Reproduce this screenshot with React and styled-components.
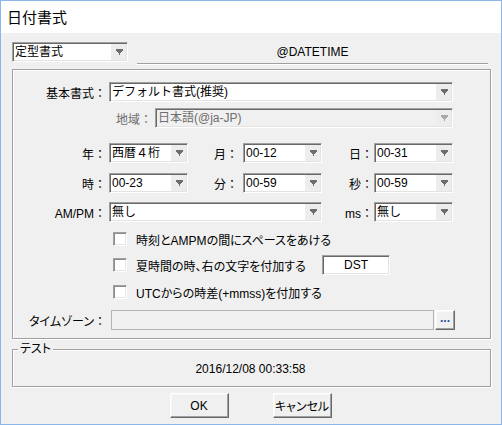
import React from 'react';
import styled, { createGlobalStyle } from 'styled-components';

const Global = createGlobalStyle`
  html, body { margin: 0; padding: 0; background: #ffffff; }
  body {
    font-family: "Liberation Sans", "Noto Sans CJK JP", sans-serif;
    font-size: 12px;
    color: #000;
  }
  * { box-sizing: border-box; }
`;

const Window = styled.div`
  width: 502px;
  height: 425px;
  border: 1px solid #8ab6e8;
  background: #f0f0f0;
  display: flex;
  flex-direction: column;
  overflow: hidden;
`;

const TitleBar = styled.div`
  height: 32px;
  background: #ffffff;
  display: flex;
  align-items: center;
  padding-left: 6px;
  padding-bottom: 1px;
  font-family: "Noto Sans CJK JP", sans-serif;
  font-size: 15px;
  color: #000;
`;

const Body = styled.div`
  flex: 1;
  display: flex;
  flex-direction: column;
  padding: 9px 0 0 11px;
`;

const TopRow = styled.div`
  display: flex;
  align-items: flex-start;
  height: 22px;
`;

const Header = styled.div`
  margin-left: 9px;
  width: 351px;
  height: 22px;
  border-bottom: 1px solid #a0a0a0;
  box-shadow: 0 1px 0 #ffffff;
  display: flex;
  justify-content: center;
  align-items: center;
  padding-bottom: 2px;
`;

const Frame = styled.div`
  margin-top: 5px;
  width: 479px;
  height: 270px;
  border: 1px solid #a0a0a0;
  box-shadow: inset 1px 1px 0 #ffffff, 1px 1px 0 #ffffff;
  display: flex;
  flex-direction: column;
  padding-top: 12px;
`;

const Row = styled.div`
  display: flex;
  align-items: center;
  height: 20px;
  margin-top: ${p => p.$mt || 0}px;
`;

const Label = styled.div`
  width: ${p => p.$w}px;
  text-align: right;
  padding-right: ${p => (p.$pr ?? 3)}px;
  white-space: nowrap;
  color: ${p => (p.$disabled ? '#6d6d6d' : '#000')};
`;

const Kana = styled.span`
  font-feature-settings: "palt";
`;

const ComboBox = styled.div`
  width: ${p => p.$w}px;
  height: 20px;
  display: flex;
  border-style: solid;
  border-width: 1px;
  border-color: #a0a0a0 #ffffff #ffffff #a0a0a0;
  box-shadow: inset 1px 1px 0 #696969, inset -1px -1px 0 #e3e3e3;
  padding: 1px;
  background: ${p => (p.$disabled ? '#f0f0f0' : '#ffffff')};
`;

const ComboText = styled.div`
  flex: 1;
  line-height: 16px;
  padding-left: 1px;
  white-space: nowrap;
  overflow: hidden;
  color: ${p => (p.$disabled ? '#6d6d6d' : '#000')};
`;

const ComboArrow = styled.div`
  width: 15px;
  height: 16px;
  background: #ededed;
  display: flex;
  align-items: center;
  justify-content: center;
  padding-left: 1px;
`;

const CheckRow = styled.div`
  display: flex;
  align-items: center;
  height: 20px;
  margin-top: ${p => p.$mt || 0}px;
  padding-left: 100px;
`;

const CheckBox = styled.div`
  width: 14px;
  height: 14px;
  background: #ffffff;
  border-style: solid;
  border-width: 1px;
  border-color: #a0a0a0 #ffffff #ffffff #a0a0a0;
  box-shadow: inset 1px 1px 0 #8c8c8c, inset -1px -1px 0 #e8e8e0;
`;

const CheckText = styled.div`
  margin-left: 9px;
  width: ${p => (p.$w ? `${p.$w}px` : 'auto')};
  white-space: nowrap;
  font-feature-settings: "palt";
`;

const TextBox = styled.div`
  width: ${p => p.$w}px;
  height: ${p => p.$h || 20}px;
  display: flex;
  align-items: center;
  justify-content: center;
  background: #ffffff;
  border-style: solid;
  border-width: 1px;
  border-color: #a0a0a0 #ffffff #ffffff #a0a0a0;
  box-shadow: inset 1px 1px 0 #696969, inset -1px -1px 0 #e3e3e3;
`;

const DisabledField = styled.div`
  width: ${p => p.$w}px;
  height: 20px;
  margin-left: 2px;
  border: 1px solid #b4b4b4;
  background: #f0f0f0;
`;

const SmallButton = styled.button`
  width: 20px;
  height: 20px;
  margin-left: 1px;
  padding: 0 0 4px 0;
  font-family: "Liberation Sans", sans-serif;
  font-size: 12px;
  font-weight: bold;
  color: #1c4fa0;
  background: #f0f0f0;
  border-style: solid;
  border-width: 1px;
  border-color: #ffffff #696969 #696969 #ffffff;
  box-shadow: inset -1px -1px 0 #a0a0a0, inset 1px 1px 0 #fbfbf5;
`;

const TestGroup = styled.div`
  position: relative;
  margin-top: 10px;
  width: 479px;
  height: 38px;
  border: 1px solid #a0a0a0;
  box-shadow: inset 1px 1px 0 #ffffff, 1px 1px 0 #ffffff;
  display: flex;
  align-items: center;
  justify-content: center;
  padding-top: 1px;
  padding-right: 2px;
`;

const Legend = styled.div`
  position: absolute;
  top: -9px;
  left: 5px;
  padding: 0 2px;
  background: #f0f0f0;
  line-height: 16px;
  font-feature-settings: "palt";
`;

const ButtonRow = styled.div`
  display: flex;
  justify-content: center;
  gap: 44px;
  margin-top: 6px;
  padding-right: 12px;
`;

const Button = styled.button`
  width: 59px;
  height: 25px;
  font-family: "Liberation Sans", "Noto Sans CJK JP", sans-serif;
  font-size: 12px;
  font-feature-settings: "palt";
  white-space: nowrap;
  color: #000;
  background: #f0f0f0;
  padding: 0;
  border-style: solid;
  border-width: 1px;
  border-color: #ffffff #696969 #696969 #ffffff;
  box-shadow: inset -1px -1px 0 #a0a0a0, inset 1px 1px 0 #f8f8f0;
`;

const Arrow = ({ disabled }) => (
  <svg width="7" height="6" viewBox="0 0 7 6" shapeRendering="crispEdges">
    <polygon
      points="0,0 7,0 7,1.5 4.2,4 4.2,6 2.8,6 2.8,4 0,1.5"
      fill={disabled ? '#a8a8a8' : '#6d6d6d'}
    />
  </svg>
);

const Combo = ({ w, value, disabled }) => (
  <ComboBox $w={w} $disabled={disabled}>
    <ComboText $disabled={disabled}>{value}</ComboText>
    <ComboArrow>
      <Arrow disabled={disabled} />
    </ComboArrow>
  </ComboBox>
);

export default function App() {
  return (
    <>
      <Global />
      <Window>
        <TitleBar>日付書式</TitleBar>
        <Body>
          <TopRow>
            <Combo w={116} value="定型書式" />
            <Header>@DATETIME</Header>
          </TopRow>
          <Frame>
            <Row>
              <Label $w={96}>基本書式：</Label>
              <Combo w={344} value="デフォルト書式(推奨)" />
            </Row>
            <Row $mt={6}>
              <Label $w={142} $disabled>地域：</Label>
              <Combo w={298} value="日本語(@ja-JP)" disabled />
            </Row>
            <Row $mt={15}>
              <Label $w={96}>年：</Label>
              <Combo w={79} value="西暦４桁" />
              <Label $w={55} $pr={5}>月：</Label>
              <Combo w={79} value="00-12" />
              <Label $w={52} $pr={1}>日：</Label>
              <Combo w={79} value="00-31" />
            </Row>
            <Row $mt={10}>
              <Label $w={96}>時：</Label>
              <Combo w={79} value="00-23" />
              <Label $w={55} $pr={5}>分：</Label>
              <Combo w={79} value="00-59" />
              <Label $w={52} $pr={1}>秒：</Label>
              <Combo w={79} value="00-59" />
            </Row>
            <Row $mt={9}>
              <Label $w={96}>AM/PM：</Label>
              <Combo w={213} value="無し" />
              <Label $w={52} $pr={1}>ms：</Label>
              <Combo w={79} value="無し" />
            </Row>
            <CheckRow $mt={7}>
              <CheckBox />
              <CheckText>時刻とAMPMの間にスペースをあける</CheckText>
            </CheckRow>
            <CheckRow $mt={6}>
              <CheckBox />
              <CheckText $w={186}>夏時間の時、右の文字を付加する</CheckText>
              <TextBox $w={68}>DST</TextBox>
            </CheckRow>
            <CheckRow $mt={7}>
              <CheckBox />
              <CheckText>UTCからの時差(+mmss)を付加する</CheckText>
            </CheckRow>
            <Row $mt={8}>
              <Label $w={96}><Kana>タイムゾーン</Kana>：</Label>
              <DisabledField $w={323} />
              <SmallButton>...</SmallButton>
            </Row>
          </Frame>
          <TestGroup>
            <Legend>テスト</Legend>
            2016/12/08 00:33:58
          </TestGroup>
          <ButtonRow>
            <Button>OK</Button>
            <Button>キャンセル</Button>
          </ButtonRow>
        </Body>
      </Window>
    </>
  );
}
